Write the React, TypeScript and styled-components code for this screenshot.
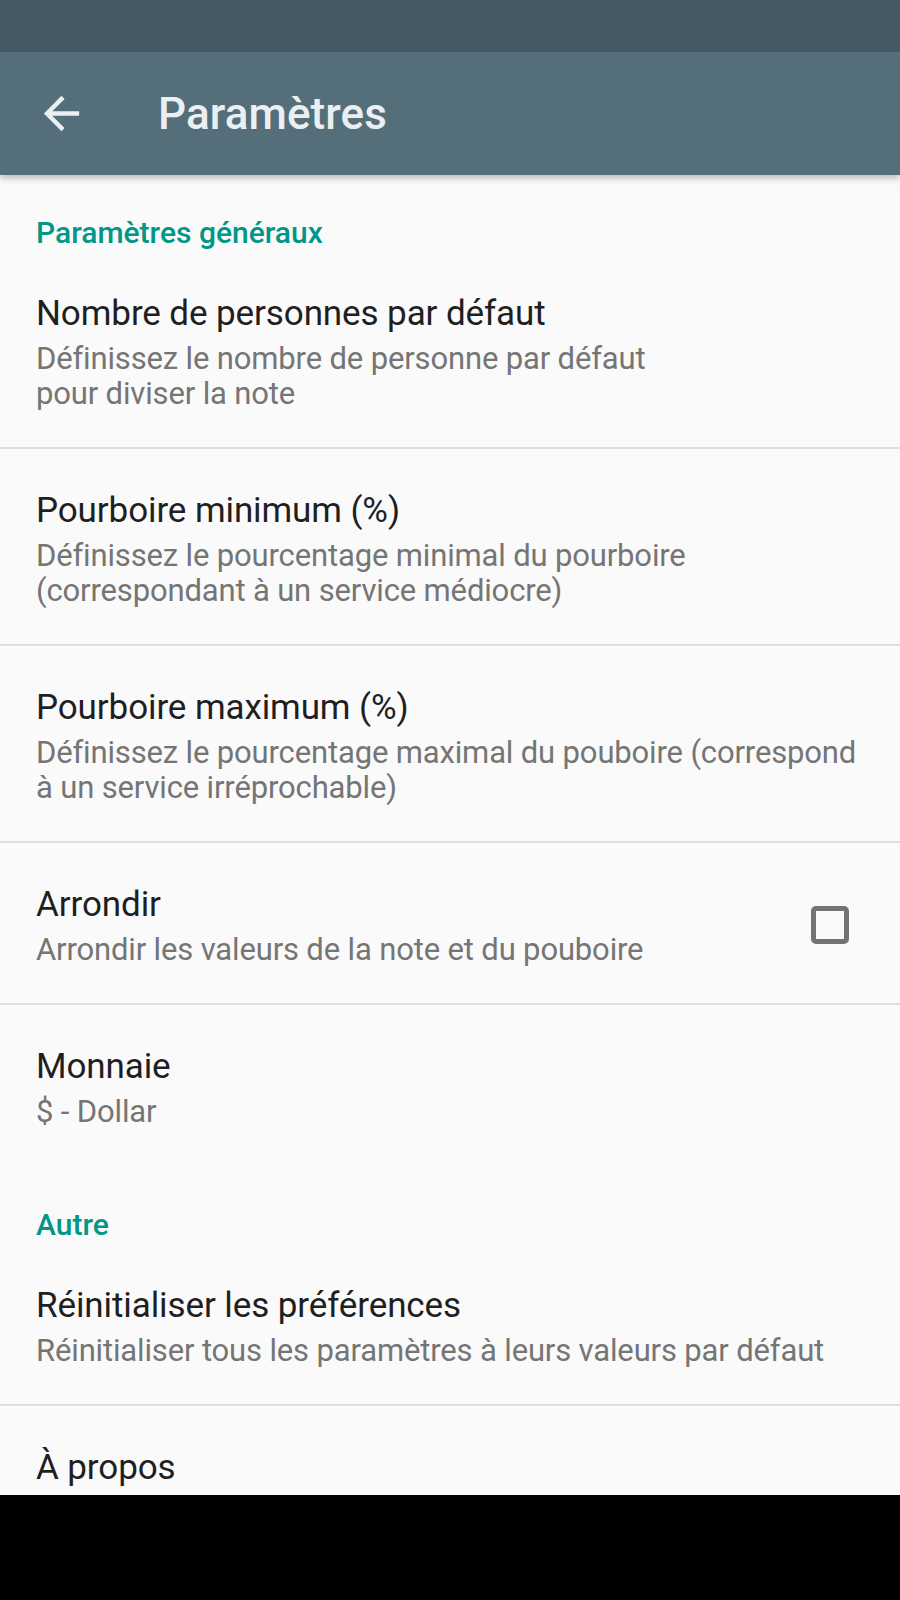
import styled, { createGlobalStyle } from "styled-components";

const GlobalStyle = createGlobalStyle`
  html, body {
    margin: 0;
    padding: 0;
    background: #fafafa;
  }
  * {
    box-sizing: border-box;
  }
`;

const Screen = styled.div`
  width: 900px;
  height: 1600px;
  display: flex;
  flex-direction: column;
  background: #fafafa;
  font-family: Roboto, "Noto Sans", "Liberation Sans", sans-serif;
  overflow: hidden;
`;

const StatusBar = styled.div`
  height: 52px;
  flex-shrink: 0;
  background: #455a64;
`;

const Toolbar = styled.header`
  height: 123px;
  flex-shrink: 0;
  display: flex;
  align-items: center;
  padding-left: 35px;
  background: #546e7a;
  color: #eceff1;
  box-shadow: 0 4px 6px rgba(0, 0, 0, 0.22);
  position: relative;
  z-index: 1;
`;

const BackButton = styled.button`
  width: 53px;
  height: 53px;
  padding: 0;
  border: none;
  background: none;
  color: inherit;
  display: flex;
  align-items: center;
  justify-content: center;
  svg {
    width: 53px;
    height: 53px;
    fill: currentColor;
  }
`;

const Title = styled.h1`
  margin: 0 0 0 70px;
  font-size: 44px;
  font-weight: 500;
  line-height: 1;
  letter-spacing: 0.1px;
`;

const Content = styled.main`
  flex: 1;
  overflow: hidden;
`;

const Category = styled.div`
  padding: 41px 35px 2px 36px;
  font-size: 30px;
  line-height: 34px;
  font-weight: 500;
  color: #009688;
`;

const Row = styled.div<{ $divider: boolean }>`
  display: flex;
  align-items: center;
  padding: 40px 20px 36px 36px;
  border-bottom: ${(p) => (p.$divider ? "2px solid #dedede" : "2px solid transparent")};
`;

const Texts = styled.div`
  flex: 1;
  min-width: 0;
`;

const ItemTitle = styled.div`
  font-size: 35px;
  line-height: 44px;
  color: #1f1f1f;
  letter-spacing: -0.1px;
`;

const Summary = styled.div`
  margin-top: 5px;
  font-size: 31px;
  line-height: 35px;
  color: #757575;
  white-space: pre;
  letter-spacing: -0.15px;
`;

const CheckBox = styled.span`
  width: 38px;
  height: 38px;
  flex-shrink: 0;
  border: 5px solid #737373;
  border-radius: 5px;
  margin: 0 31px 0 24px;
`;

const NavBar = styled.div`
  height: 105px;
  flex-shrink: 0;
  background: #000;
`;

type Pref = {
  title: string;
  summary?: string;
  checkbox?: boolean;
  divider: boolean;
};

type Section = { name: string; items: Pref[] };

const sections: Section[] = [
  {
    name: "Paramètres généraux",
    items: [
      {
        title: "Nombre de personnes par défaut",
        summary: "Définissez le nombre de personne par défaut\npour diviser la note",
        divider: true,
      },
      {
        title: "Pourboire minimum (%)",
        summary:
          "Définissez le pourcentage minimal du pourboire\n(correspondant à un service médiocre)",
        divider: true,
      },
      {
        title: "Pourboire maximum (%)",
        summary:
          "Définissez le pourcentage maximal du pouboire (correspond\nà un service irréprochable)",
        divider: true,
      },
      {
        title: "Arrondir",
        summary: "Arrondir les valeurs de la note et du pouboire",
        checkbox: true,
        divider: true,
      },
      { title: "Monnaie", summary: "$ - Dollar", divider: false },
    ],
  },
  {
    name: "Autre",
    items: [
      {
        title: "Réinitialiser les préférences",
        summary: "Réinitialiser tous les paramètres à leurs valeurs par défaut",
        divider: true,
      },
      { title: "À propos", divider: false },
    ],
  },
];

export default function App() {
  return (
    <>
      <GlobalStyle />
      <Screen>
        <StatusBar />
        <Toolbar>
          <BackButton aria-label="Retour">
            <svg viewBox="0 0 24 24">
              <path d="M20 11H7.83l5.59-5.59L12 4l-8 8 8 8 1.41-1.41L7.83 13H20v-2z" />
            </svg>
          </BackButton>
          <Title>Paramètres</Title>
        </Toolbar>
        <Content>
          {sections.map((section) => (
            <section key={section.name}>
              <Category>{section.name}</Category>
              {section.items.map((item) => (
                <Row key={item.title} $divider={item.divider}>
                  <Texts>
                    <ItemTitle>{item.title}</ItemTitle>
                    {item.summary && <Summary>{item.summary}</Summary>}
                  </Texts>
                  {item.checkbox && <CheckBox />}
                </Row>
              ))}
            </section>
          ))}
        </Content>
        <NavBar />
      </Screen>
    </>
  );
}
